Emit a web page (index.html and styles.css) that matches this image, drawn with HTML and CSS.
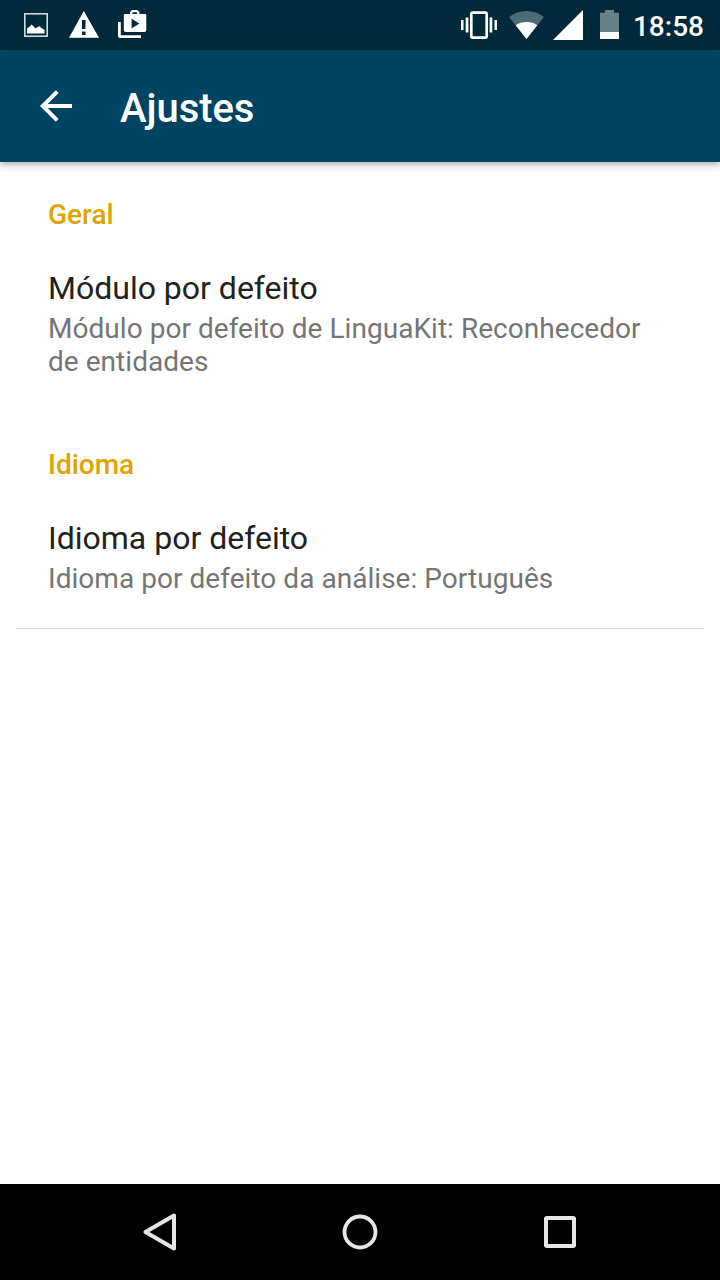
FILE: index.html
```html
<!DOCTYPE html>
<html lang="pt">
<head>
<meta charset="utf-8">
<title>Ajustes</title>
<link rel="stylesheet" href="styles.css">
</head>
<body>
<div class="screen">
  <div class="status-bar">
    <div class="notifications">
      <svg width="24" height="50" viewBox="24 0 24 50"><rect x="24.8" y="13.8" width="22.4" height="22.4" fill="none" stroke="#dfe5e7" stroke-width="1.5"/><path fill="#fff" d="M27 33.500v-5l2.500-1.700 2.200-2.300 3.600 3.700 1.700-.7 2.500-1.200 2.200 1.900 2.800 1.500v3.800z"/></svg>
      <svg width="30" height="50" viewBox="69 0 30 50"><path fill="#fff" fill-rule="evenodd" d="M83.8 11 99 37.800H69zM82 20v9h3.500v-9zm0 11.500V35h3.500v-3.500z"/></svg>
      <svg width="29" height="50" viewBox="118 0 29 50"><path fill="#fff" fill-rule="evenodd" d="M130 14v-2l2-2h5.300l2.200 2v2H145q1.300 0 1.300 1.300V30q0 2-2 2h-18.500q-2 0-2-2V15.300q0-1.300 1.300-1.300zm2.500 0h4.500v-1.700h-4.500zm-.9 4.800v9.600l7.800-4.800z"/><path fill="#fff" d="M118 22h2.800v13.200H141V38h-21q-2 0-2-2z"/></svg>
    </div>
    <div class="system">
      <svg width="36" height="50" viewBox="461 0 36 50"><rect x="471.300" y="12.700" width="15.400" height="24.900" rx="1.500" fill="none" stroke="#fff" stroke-width="2.700"/><path fill="#fff" d="M461 20h2.500v10H461zm4.700-2.500h2.700v15h-2.700zm23.900 0h2.700v15h-2.700zm4.900 2.500h2.500v10h-2.500z"/></svg>
      <svg class="wifi" width="35" height="50" viewBox="508.500 0 35 50"><path fill="#4d6a77" d="M526 39 508.500 17Q516 11 526 11t17.500 6z"/><path fill="#fff" d="M526 39 515.200 25.300Q520 22 526 22t10.800 3.300z"/></svg>
      <svg class="signal" width="30" height="50" viewBox="553 0 30 50"><path fill="#fff" d="M583 10v30h-30z"/></svg>
      <svg class="battery" width="19" height="50" viewBox="600 0 19 50"><path fill="#66808a" d="M600 12.700h5V10h9v2.700h5V32h-19z"/><path fill="#fff" d="M600 32h19v7h-19z"/></svg>
      <span class="clock">18:58</span>
    </div>
  </div>
  <header class="app-bar">
    <svg width="32" height="32" viewBox="0 0 32 32"><path fill="none" stroke="#fff" stroke-width="4" d="M32 16H4M17.200 1.600 2.800 16l14.400 14.400"/></svg>
    <h1 class="title">Ajustes</h1>
  </header>
  <main class="settings">
    <section class="group">
      <h2 class="category">Geral</h2>
      <div class="preference">
        <div class="name">Módulo por defeito</div>
        <div class="summary">Módulo por defeito de LinguaKit: Reconhecedor de entidades</div>
      </div>
    </section>
    <section class="group">
      <h2 class="category">Idioma</h2>
      <div class="preference">
        <div class="name">Idioma por defeito</div>
        <div class="summary">Idioma por defeito da análise: Português</div>
      </div>
    </section>
    <hr class="divider">
  </main>
  <nav class="nav-bar">
    <svg width="200" height="96" viewBox="0 0 200 96"><path fill="none" stroke="#e6e6e6" stroke-width="4" stroke-linejoin="round" d="M114 31.500v33L85.500 48z"/></svg>
    <svg width="200" height="96" viewBox="0 0 200 96"><circle cx="100" cy="48" r="15.500" fill="none" stroke="#e6e6e6" stroke-width="3.800"/></svg>
    <svg width="200" height="96" viewBox="0 0 200 96"><rect x="86" y="34" width="28" height="28" rx="1" fill="none" stroke="#e6e6e6" stroke-width="4"/></svg>
  </nav>
</div>
</body>
</html>
```
FILE: styles.css
```css
body {
  margin: 0;
  font-family: Roboto, "Noto Sans", sans-serif;
  background: #fff;
}
svg { display: block; flex: none; }
.screen {
  display: flex;
  flex-direction: column;
  width: 720px;
  height: 1280px;
  overflow: hidden;
}
.status-bar {
  display: flex;
  justify-content: space-between;
  height: 50px;
  padding: 0 16px 0 24px;
  background: #00293c;
}
.notifications { display: flex; }
.notifications svg + svg { margin-left: 21px; }
.notifications svg:last-child { margin-left: 19px; }
.system { display: flex; }
.wifi { margin-left: 12px; }
.signal { margin-left: 9px; }
.battery { margin-left: 17px; }
.clock {
  margin-left: 14px;
  padding-top: 11px;
  color: #fff;
  font-size: 28px;
  font-weight: 500;
  line-height: 32px;
}
.app-bar {
  display: flex;
  align-items: center;
  gap: 48px;
  height: 112px;
  padding-left: 40px;
  background: #004463;
  box-shadow: 0 2px 8px rgba(0, 0, 0, 0.36);
}
.title {
  margin: 0;
  padding-top: 6px;
  color: #fff;
  font-size: 40px;
  font-weight: 500;
  line-height: 48px;
  letter-spacing: -0.05px;
}
.settings { flex: 1; padding-top: 37px; }
.group { padding: 0 48px; }
.group + .group { margin-top: 71px; }
.category {
  margin: 0;
  color: #e0a300;
  font-size: 28px;
  font-weight: 500;
  line-height: 32px;
}
.preference { padding-top: 38px; }
.name {
  margin-bottom: 5px;
  color: #212121;
  font-size: 32px;
  line-height: 38px;
}
.summary {
  color: #757575;
  font-size: 28px;
  line-height: 33px;
  letter-spacing: 0.04px;
}
.divider {
  height: 1px;
  margin: 33px 16px 0;
  border: 0;
  background: #dedede;
}
.nav-bar {
  display: flex;
  justify-content: center;
  height: 96px;
  background: #000;
}
```
